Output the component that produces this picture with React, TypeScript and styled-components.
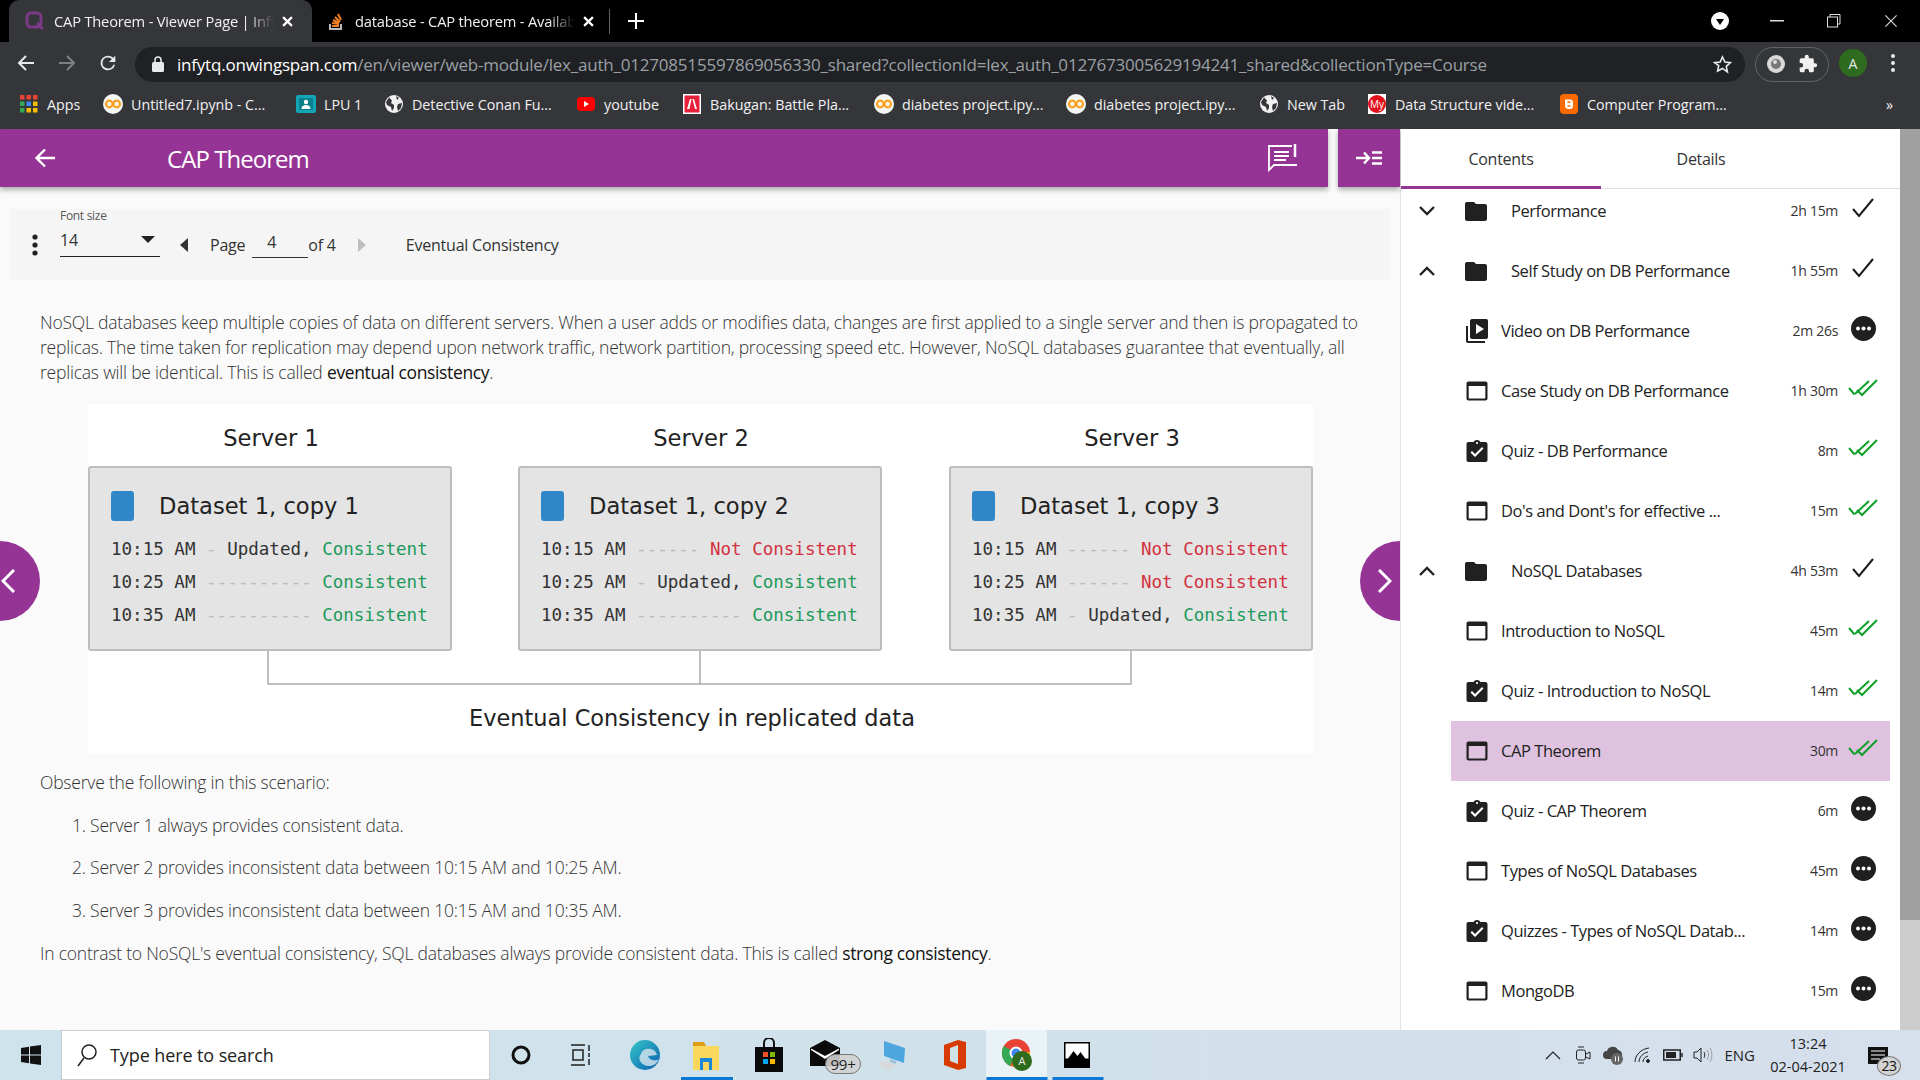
import React from "react";
import styled, { createGlobalStyle } from "styled-components";

const Global = createGlobalStyle`
  html, body { margin: 0; padding: 0; height: 100%; overflow: hidden; background: #fafafa; }
  body { font-family: "Open Sans", "Noto Sans", sans-serif; }
  * { box-sizing: border-box; }
`;
const PURPLE = "#953494";

const Page = styled.div`height: 1080px; width: 1920px; display: flex; flex-direction: column; overflow: hidden;`;

/* ---------- browser chrome ---------- */
const TabStrip = styled.div`height: 42px; background: #000; display: flex; align-items: stretch; padding-left: 9px; color: #fff; flex: none;`;
const Tab = styled.div<{ $active?: boolean }>`
  width: ${p => (p.$active ? 303 : 297)}px; display: flex; align-items: center;
  padding-left: ${p => (p.$active ? 16 : 14)}px; border-radius: 10px 10px 0 0;
  background: ${p => (p.$active ? "#35363a" : "transparent")};
`;
const TabTitle = styled.div`
  width: 220px; margin-left: 9px; font-size: 14.7px; letter-spacing: -0.2px; white-space: nowrap; overflow: hidden; color: #f1f1f1;
  -webkit-mask-image: linear-gradient(90deg, #000 88%, transparent);
  mask-image: linear-gradient(90deg, #000 88%, transparent);
`;
const TabClose = styled.span`margin-left: 8px; display: flex;`;
const TabDivider = styled.div`width: 1px; height: 25px; background: #5f6368; align-self: center;`;
const PlusButton = styled.div`margin-left: 18px; display: flex; align-items: center;`;
const WindowControls = styled.div`margin-left: auto; display: flex; align-items: center; padding-right: 1px;`;
const ControlSlot = styled.div`width: 57px; display: flex; justify-content: center; align-items: center;`;

const Toolbar = styled.div`height: 42px; background: #35363a; display: flex; align-items: center; padding-left: 17px; flex: none;`;
const NavIcon = styled.div<{ $w: number }>`width: ${p => p.$w}px; display: flex; align-items: center; flex: none;`;
const UrlBar = styled.div`
  width: 1610px; height: 35px; margin-top: 2px; border-radius: 18px; background: #202124; display: flex; align-items: center; padding-left: 17px; flex: none;
`;
const UrlText = styled.div`margin-left: 13px; font-size: 17px; letter-spacing: -0.21px; color: #9aa0a6; white-space: nowrap;`;
const UrlHost = styled.span`color: #fff;`;
const Star = styled.div`margin-left: auto; margin-right: 13px; display: flex;`;
const Pill = styled.div`
  margin-left: 10px; width: 74px; height: 35px; margin-top: 2px; border: 1px solid #5f6368; border-radius: 18px; display: flex; align-items: center; justify-content: space-around; padding: 0 4px; flex: none;
`;
const Avatar = styled.div`
  margin-left: 10px; width: 28px; height: 28px; border-radius: 50%; background: #2f6b1e; color: #e6e6e6; font-size: 14px;
  display: flex; align-items: center; justify-content: center; flex: none;
`;
const MenuDots = styled.div`margin-left: 24px; display: flex;`;

const Bookmarks = styled.div`height: 45px; background: #35363a; display: flex; align-items: center; padding-left: 20px; color: #f1f1f1; flex: none; padding-bottom: 5px;`;
const Bookmark = styled.div<{ $w: number }>`width: ${p => p.$w}px; display: flex; align-items: center; gap: 9px; font-size: 14.3px; letter-spacing: -0.02px; white-space: nowrap; flex: none;`;

/* ---------- app ---------- */
const Body = styled.div`flex: 1; display: flex; min-height: 0; background: #fafafa;`;
const Viewer = styled.div`width: 1400px; position: relative; flex: none; display: flex; flex-direction: column;`;
const HeaderRow = styled.div`display: flex; gap: 10px; height: 58px; flex: none;`;
const TitleBar = styled.div`
  width: 1328px; background: ${PURPLE}; color: #fff; display: flex; align-items: center; padding-left: 34px;
  box-shadow: 0 3px 5px rgba(0,0,0,.3);
`;
const PageTitle = styled.h1`margin: 0 0 0 112px; font-size: 24px; font-weight: 400; letter-spacing: -0.95px;`;
const BarIcon = styled.div`margin-left: auto; margin-right: 30px; display: flex;`;
const ToggleBar = styled.div`
  width: 62px; background: ${PURPLE}; display: flex; align-items: center; justify-content: center; box-shadow: 0 3px 5px rgba(0,0,0,.3);
`;

const Controls = styled.div`
  margin: 22px 10px 0; height: 71px; background: #f5f5f5; display: flex; align-items: center; padding-left: 21px; color: #333; font-size: 16px; letter-spacing: -0.22px; flex: none;
`;
const KebabSlot = styled.div`width: 8px; display: flex; margin-right: 21px;`;
const FontField = styled.div`width: 100px; height: 71px; display: flex; flex-direction: column; margin-right: 20px;`;
const FieldLabel = styled.div`font-size: 12px; letter-spacing: -0.3px; color: #555; margin-top: -2px; line-height: 17px;`;
const FieldValue = styled.div`
  height: 33px; margin-top: 0; border-bottom: 1px solid #222; display: flex; align-items: center; justify-content: space-between; font-size: 16px; padding: 6px 5px 7px 0;
`;
const PageLabel = styled.span`margin-left: 22px;`;
const PageInput = styled.div`width: 56px; height: 29px; margin: 0 0 22px 7px; border-bottom: 1px solid #333; padding: 2px 0 0 15px; align-self: flex-end;`;
const NextArrow = styled.svg`margin-left: 22px;`;
const SectionName = styled.span`margin-left: 40px;`;

const Article = styled.div`padding: 30px 0 0 40px; color: #333; font-size: 17.5px; line-height: 25px; letter-spacing: -0.21px; font-weight: 300;`;
const Para = styled.p`margin: 0; width: 1330px;`;
const Strong = styled.span`color: #111; font-weight: 400; letter-spacing: -0.36px;`;
const Steps = styled.ol`margin: 0; padding: 0 0 0 32px; list-style-position: inside;`;
const Step = styled.li`margin: 17.5px 0 0;`;
const Observe = styled(Para)`margin-top: 17.5px;`;
const Closing = styled(Para)`margin-top: 18px;`;

const Diagram = styled.div`
  margin: 18.5px 0 0 48px; width: 1225px; height: 349px; background: #fff; font-family: "DejaVu Sans", sans-serif; font-weight: 400; color: #222; letter-spacing: 0; display: flex; flex-direction: column;
`;
const Servers = styled.div`display: flex; gap: 66px;`;
const ServerCol = styled.div`width: 364px; display: flex; flex-direction: column; align-items: center; &:last-child { margin-left: 1px; }`;
const ServerName = styled.div`height: 62px; line-height: 68px; font-size: 22.6px; padding-left: 2px;`;
const ServerBox = styled.div`
  width: 100%; height: 185px; background: #e4e4e4; border: 2px solid #bdbdbd; border-radius: 3px; padding: 23px 0 0 21px;
`;
const DatasetHead = styled.div`display: flex; align-items: center; font-size: 22.6px; height: 31px; gap: 25px;`;
const BlueChip = styled.span`width: 23px; height: 30px; background: #3087c8; border-radius: 3px; flex: none;`;
const LogRows = styled.div`margin-top: 11px; font-family: "DejaVu Sans Mono", monospace; font-size: 17.55px; line-height: 33px; white-space: pre; color: #333;`;
const Dash = styled.span`color: #bbb;`;
const Good = styled.span`color: #1c9a5b;`;
const Bad = styled.span`color: #d2323f;`;
const Connector = styled.svg`display: block; flex: none;`;
const Caption = styled.div`text-align: center; font-size: 22.45px; margin-top: 15px; padding-right: 17px; line-height: 32px;`;

const SideNav = styled.div<{ $side: "left" | "right" }>`
  position: absolute; top: 412px; ${p => p.$side}: 0; width: 40px; height: 80px; background: ${PURPLE}; display: flex; align-items: center; justify-content: center;
  border-radius: ${p => (p.$side === "left" ? "0 40px 40px 0" : "40px 0 0 40px")};
  padding-${p => (p.$side === "left" ? "right" : "left")}: ${p => (p.$side === "left" ? 24 : 10)}px;
`;

/* ---------- sidebar ---------- */
const Sidebar = styled.div`width: 500px; flex: none; background: #fff; border-left: 1px solid #e2e2e2; display: flex; flex-direction: column; overflow: hidden; color: #222;`;
const Tabs = styled.div`height: 60px; display: flex; border-bottom: 1px solid #e0e0e0; position: relative; z-index: 1; background: #fff; flex: none;`;
const SideTab = styled.div<{ $on?: boolean }>`
  width: 200px; display: flex; align-items: center; justify-content: center; font-size: 16px; letter-spacing: -0.3px; color: #333; padding-top: 3px;
  border-bottom: 3px solid ${p => (p.$on ? PURPLE : "transparent")}; margin-bottom: -1px;
`;
const List = styled.div`margin-top: -8px;`;
const Row = styled.div<{ $child?: boolean; $on?: boolean }>`
  height: 60px; display: flex; align-items: center; padding-right: 4px;
  margin: 0 10px 0 ${p => (p.$child ? 50 : 0)}px; padding-left: ${p => (p.$child ? 14 : 0)}px;
  background: ${p => (p.$on ? "#dfc2df" : "transparent")};
`;
const Chevron = styled.div`width: 52px; display: flex; justify-content: center; margin-right: 11px; flex: none;`;
const RowIcon = styled.div`width: 24px; display: flex; justify-content: center; flex: none;`;
const RowTitle = styled.div<{ $folder?: boolean }>`
  margin-left: ${p => (p.$folder ? 23 : 12)}px; font-size: 16.5px; letter-spacing: -0.44px; white-space: nowrap; margin-top: -2px;
`;
const Duration = styled.div`margin-left: auto; font-size: 14px; letter-spacing: -0.3px; color: #333; margin-top: -2px;`;
const Status = styled.div`width: 46px; margin-left: 2px; display: flex; justify-content: center; margin-top: -6px;`;
const Scrollbar = styled.div`width: 20px; flex: none; background: #cdcdcd; display: flex; flex-direction: column;`;
const Thumb = styled.div`height: 791px; background: #a0a0a0;`;

/* ---------- taskbar ---------- */
const Taskbar = styled.div`height: 50px; flex: none; display: flex; align-items: center; background: linear-gradient(90deg, #cfe3ec, #d0e1ea 50%, #d6dfec); color: #111;`;
const StartSlot = styled.div`width: 61px; display: flex; justify-content: center;`;
const SearchBox = styled.div`width: 429px; height: 50px; background: #fff; border: 1px solid #ccc; display: flex; align-items: center; padding-left: 15px; gap: 13px; font-size: 18px; color: #222; letter-spacing: -0.1px;`;
const TaskSlot = styled.div<{ $active?: boolean }>`
  width: ${p => (p.$active ? 61 : 62)}px; height: 50px; display: flex; align-items: center; justify-content: center; position: relative; flex: none;
  background: ${p => (p.$active ? "#e9f2f7" : "transparent")};
`;
const OpenBar = styled.span<{ $w: number }>`
  position: absolute; bottom: 0; left: 50%; transform: translateX(-50%); width: ${p => p.$w}px; height: 3px; background: #0a78d4;
`;
const Badge = styled.span`
  position: absolute; right: 1px; bottom: 6px; width: 36px; height: 20px; border-radius: 10px; background: rgba(210,210,210,.9); border: 1px solid #777; font-size: 15px;
  display: flex; align-items: center; justify-content: center; letter-spacing: -0.3px; color: #222;
`;
const Tray = styled.div`margin-left: auto; display: flex; align-items: center; height: 50px;`;
const TraySlot = styled.div`width: 30px; display: flex; justify-content: center;`;
const Lang = styled.div`font-size: 15px; margin: 0 11px 0 6px; color: #222;`;
const Clock = styled.div`font-size: 14.5px; line-height: 23px; text-align: center; width: 84px; color: #222;`;
const Notif = styled.div`margin-left: 18px; margin-right: 20px; position: relative; display: flex; width: 32px;`;
const NotifCount = styled.span`
  position: absolute; left: 9px; top: 9px; width: 24px; height: 20px; border-radius: 50%; border: 1px solid #777; background: #d3d3d3; font-size: 14px; display: flex; align-items: center; justify-content: center; letter-spacing: -.5px;
`;

/* ---------- drawings ---------- */
const I = ({ d, size = 24 }: { d: string; size?: number }) => (
  <svg width={size} height={size} viewBox="0 0 24 24" fill="#212121"><path d={d} /></svg>
);
const FOLDER = "M10 3H3C1.9 3 1 3.9 1 5v15c0 1.100.9 2 2 2h18c1.100 0 2-.9 2-2V7c0-1.100-.9-2-2-2h-9z";
const ASSET = "M20.500 2.500H3.500C2.400 2.500 1.500 3.400 1.500 4.500v15c0 1.100.9 2 2 2h17c1.100 0 2-.9 2-2v-15c0-1.100-.9-2-2-2zm-.2 17H3.700V7h16.600z";
const QUIZ = "M20.500 3h-5.200C14.900 1.800 13.600 1 12 1s-2.900.8-3.300 2H3.500c-1.100 0-2 .9-2 2v16c0 1.100.9 2 2 2h17c1.100 0 2-.9 2-2V5c0-1.100-.9-2-2-2zM12 3c.55 0 1 .45 1 1s-.45 1-1 1-1-.45-1-1 .45-1 1-1zm-2 15l-4.500-4.500 1.500-1.500 3 3 7-7 1.500 1.500z";
const VIDEO = "M3 7H1v15c0 1.100.9 2 2 2h17v-2H3zM23 1.800C23 .8 22.200 0 21.200 0H7C6 0 5 .8 5 1.800V18c0 1 1 2 2 2h14.200c1 0 1.800-1 1.800-2zM11 15V5l8 5z";

type Kind = "asset" | "quiz" | "video";
const KindIcon = ({ kind }: { kind: Kind }) => <I d={kind === "asset" ? ASSET : kind === "quiz" ? QUIZ : VIDEO} size={26} />;

const Check = () => (
  <svg width="24" height="22" viewBox="0 0 24 22" fill="none" stroke="#1a1a1a" strokeWidth="2"><path d="M2 12l6 7L22 2" /></svg>
);
const DoubleCheck = () => (
  <svg width="30" height="18" viewBox="0 0 30 18" fill="none" stroke="#12a02a" strokeWidth="2"><path d="M1 9l5.500 6.500M7 15L21 2" /><path d="M9 11l5 5L29 1" /></svg>
);
const Pending = () => (
  <svg width="25" height="25" viewBox="0 0 25 25"><circle cx="12.500" cy="12.500" r="12.500" fill="#1f1f1f" /><circle cx="7" cy="12.500" r="2" fill="#fff" /><circle cx="12.500" cy="12.500" r="2" fill="#fff" /><circle cx="18" cy="12.500" r="2" fill="#fff" /></svg>
);
const ChevronIcon = ({ up }: { up?: boolean }) => (
  <svg width="16" height="10" viewBox="0 0 16 10" fill="none" stroke="#222" strokeWidth="2.400"><path d={up ? "M1 9l7-7 7 7" : "M1 1l7 7 7-7"} /></svg>
);
const Colab = () => (
  <svg width="20" height="20" viewBox="0 0 20 20" style={{ margin: "0 -1px" }}><circle cx="10" cy="10" r="10" fill="#f5f5f5" /><g fill="none" stroke="#f9a11b" strokeWidth="2.200"><circle cx="6.300" cy="10" r="3.300" /><circle cx="13.700" cy="10" r="3.300" /></g></svg>
);
const Globe = () => (
  <svg width="18" height="18" viewBox="0 0 18 18"><circle cx="9" cy="9" r="9" fill="#f1f1f1" /><path d="M4 2.500l3 3-1 2.500 3 2v3l-2 3-1-4-4-2-1-3zM11 1l3 2-2 2zM13 9l4-1-1 5-3 3-1-4z" fill="#35363a" /></svg>
);
const AppsGrid = () => (
  <svg width="18" height="18" viewBox="0 0 18 18">
    {["#ea4335", "#ea4335", "#ea4335", "#34a853", "#4285f4", "#fbbc05", "#34a853", "#fbbc05", "#fbbc05"].map((c, i) => (
      <rect key={i} x={(i % 3) * 6.500} y={Math.floor(i / 3) * 6.500} width="4.500" height="4.500" fill={c} />
    ))}
  </svg>
);
const Lpu = () => (
  <svg width="20" height="18" viewBox="0 0 20 18" style={{ margin: "0 -1px" }}><rect width="20" height="18" rx="2" fill="#12a5b5" /><rect x="3" y="3" width="14" height="12" fill="#0a7f8c" /><circle cx="10" cy="7" r="2.200" fill="#fff" /><path d="M5.500 14c0-3 2-4 4.500-4s4.500 1 4.500 4z" fill="#fff" /></svg>
);
const Youtube = () => (
  <svg width="18" height="18" viewBox="0 0 18 18"><rect y="2" width="18" height="14" rx="4" fill="#f00" /><path d="M7 6l5 3-5 3z" fill="#fff" /></svg>
);
const Bakugan = () => (
  <svg width="18" height="20" viewBox="0 0 18 20" style={{ margin: "-1px 0" }}><rect width="18" height="20" fill="#fff" /><rect x="1.500" y="1.500" width="15" height="17" fill="#e8213b" /><path d="M4 15L7 5h1.500L6.500 15zM9.500 5H11l3 10h-2z" fill="#fff" /></svg>
);
const MyIcon = () => (
  <svg width="18" height="20" viewBox="0 0 18 20"><rect width="18" height="20" fill="#fff" /><circle cx="9" cy="10" r="9" fill="#e2101b" /><text x="9" y="14" fontSize="10" fill="#fff" textAnchor="middle" fontFamily="Open Sans">My</text></svg>
);
const Blogger = () => (
  <svg width="18" height="20" viewBox="0 0 18 20"><rect width="18" height="20" rx="4" fill="#ff6a00" /><path d="M5 5.500h5a3 3 0 0 1 3 3v1v2a3.500 3.500 0 0 1-3.500 3.500h-1A3.500 3.500 0 0 1 5 11.500z" fill="#fff" /><path d="M7.500 8h3M7.500 12h3" stroke="#ff6a00" strokeWidth="1.400" /></svg>
);
const X = ({ s = 11, c = "#fff", w = 2 }: { s?: number; c?: string; w?: number }) => (
  <svg width={s} height={s} viewBox="0 0 10 10" stroke={c} strokeWidth={w} fill="none"><path d="M1 1l8 8M9 1l-8 8" /></svg>
);

const bookmarks: { w: number; label: string; icon: React.ReactNode }[] = [
  { w: 84, label: "Apps", icon: <AppsGrid /> },
  { w: 193, label: "Untitled7.ipynb - C...", icon: <Colab /> },
  { w: 88, label: "LPU 1", icon: <Lpu /> },
  { w: 192, label: "Detective Conan Fu...", icon: <Globe /> },
  { w: 106, label: "youtube", icon: <Youtube /> },
  { w: 192, label: "Bakugan: Battle Pla...", icon: <Bakugan /> },
  { w: 192, label: "diabetes project.ipy...", icon: <Colab /> },
  { w: 193, label: "diabetes project.ipy...", icon: <Colab /> },
  { w: 108, label: "New Tab", icon: <Globe /> },
  { w: 192, label: "Data Structure vide...", icon: <MyIcon /> },
  { w: 326, label: "Computer Program...", icon: <Blogger /> },
];

type Item = { t: string; d: string; s: "check" | "double" | "pending"; kind?: Kind; open?: boolean; on?: boolean };
const items: Item[] = [
  { t: "Performance", d: "2h 15m", s: "check" },
  { t: "Self Study on DB Performance", d: "1h 55m", s: "check", open: true },
  { t: "Video on DB Performance", d: "2m 26s", s: "pending", kind: "video" },
  { t: "Case Study on DB Performance", d: "1h 30m", s: "double", kind: "asset" },
  { t: "Quiz - DB Performance", d: "8m", s: "double", kind: "quiz" },
  { t: "Do's and Dont's for effective ...", d: "15m", s: "double", kind: "asset" },
  { t: "NoSQL Databases", d: "4h 53m", s: "check", open: true },
  { t: "Introduction to NoSQL", d: "45m", s: "double", kind: "asset" },
  { t: "Quiz - Introduction to NoSQL", d: "14m", s: "double", kind: "quiz" },
  { t: "CAP Theorem", d: "30m", s: "double", kind: "asset", on: true },
  { t: "Quiz - CAP Theorem", d: "6m", s: "pending", kind: "quiz" },
  { t: "Types of NoSQL Databases", d: "45m", s: "pending", kind: "asset" },
  { t: "Quizzes - Types of NoSQL Datab...", d: "14m", s: "pending", kind: "quiz" },
  { t: "MongoDB", d: "15m", s: "pending", kind: "asset" },
];

const Log = ({ time, mode }: { time: string; mode: "updated" | "same" | "not" }) => (
  <div>
    {time}{" "}
    {mode === "updated" && <><Dash>-</Dash> Updated, <Good>Consistent</Good></>}
    {mode === "same" && <><Dash>----------</Dash> <Good>Consistent</Good></>}
    {mode === "not" && <><Dash>------</Dash> <Bad>Not Consistent</Bad></>}
  </div>
);

const servers: { n: number; rows: ("updated" | "same" | "not")[] }[] = [
  { n: 1, rows: ["updated", "same", "same"] },
  { n: 2, rows: ["not", "updated", "same"] },
  { n: 3, rows: ["not", "not", "updated"] },
];

export default function App() {
  return (
    <Page>
      <Global />
      <TabStrip>
        <Tab $active>
          <svg width="20" height="20" viewBox="0 0 20 20" fill="none" stroke="#7b3a86" strokeWidth="3"><rect x="2" y="2" width="14" height="14" rx="4" /><path d="M12 12l6 6" /></svg>
          <TabTitle>CAP Theorem - Viewer Page | Infytq</TabTitle>
          <TabClose><X /></TabClose>
        </Tab>
        <Tab>
          <svg width="20" height="20" viewBox="0 0 20 20" fill="none" strokeWidth="2"><path d="M4 13v5h11v-5" stroke="#bcbbbb" /><path d="M6 15h7M6 12l7 1M7 9l6 3M9 6l5 5M12 3l3 6" stroke="#f48024" /></svg>
          <TabTitle>database - CAP theorem - Availability</TabTitle>
          <TabClose><X /></TabClose>
        </Tab>
        <TabDivider />
        <PlusButton>
          <svg width="16" height="16" viewBox="0 0 16 16" stroke="#fff" strokeWidth="2"><path d="M8 0v16M0 8h16" /></svg>
        </PlusButton>
        <WindowControls>
          <ControlSlot>
            <svg width="18" height="18" viewBox="0 0 18 18"><circle cx="9" cy="9" r="9" fill="#fff" /><path d="M5 7h8l-4 6z" fill="#000" /></svg>
          </ControlSlot>
          <ControlSlot><svg width="14" height="2"><rect width="14" height="1.500" fill="#ddd" /></svg></ControlSlot>
          <ControlSlot><svg width="14" height="14" viewBox="0 0 14 14" fill="none" stroke="#ddd"><rect x=".5" y="3" width="10" height="10" /><path d="M3 3V.5h10V10h-2.500" /></svg></ControlSlot>
          <ControlSlot><X s={14} c="#ddd" w={.8} /></ControlSlot>
        </WindowControls>
      </TabStrip>

      <Toolbar>
        <NavIcon $w={41}><svg width="18" height="18" viewBox="0 0 18 18" fill="none" stroke="#e8eaed" strokeWidth="2"><path d="M17 9H2M9 2L2 9l7 7" /></svg></NavIcon>
        <NavIcon $w={41}><svg width="18" height="18" viewBox="0 0 18 18" fill="none" stroke="#7d8084" strokeWidth="2"><path d="M1 9h15M9 2l7 7-7 7" /></svg></NavIcon>
        <NavIcon $w={36}><svg width="22" height="22" viewBox="0 0 24 24" fill="#e8eaed" style={{ marginLeft: -2 }}><path d="M17.650 6.350A8 8 0 1 0 19.730 14h-2.080A6 6 0 1 1 12 6c1.660 0 3.140.69 4.220 1.780L13 11h7V4z" /></svg></NavIcon>
        <UrlBar>
          <svg width="12" height="16" viewBox="0 0 12 16"><rect y="6" width="12" height="10" rx="1.500" fill="#e8eaed" /><path d="M3 6V4a3 3 0 0 1 6 0v2" fill="none" stroke="#e8eaed" strokeWidth="1.500" /></svg>
          <UrlText><UrlHost>infytq.onwingspan.com</UrlHost>/en/viewer/web-module/lex_auth_012708515597869056330_shared?collectionId=lex_auth_0127673005629194241_shared&amp;collectionType=Course</UrlText>
          <Star>
            <svg width="19" height="19" viewBox="0 0 24 24" fill="none" stroke="#e8eaed" strokeWidth="2"><path d="M12 2.500l3 6.400 7 .8-5.200 4.700 1.400 6.900L12 17l-6.200 3.300 1.400-6.900L2 9.700l7-.8z" /></svg>
          </Star>
        </UrlBar>
        <Pill>
          <svg width="20" height="20" viewBox="0 0 20 20"><circle cx="10" cy="10" r="9" fill="#d8d8d8" /><circle cx="10" cy="10" r="5" fill="#777" /><circle cx="9" cy="8" r="2" fill="#ddd" /></svg>
          <svg width="20" height="20" viewBox="0 0 24 24" fill="#f1f1f1"><path d="M20.500 11H19V7a2 2 0 0 0-2-2h-4V3.500a2.500 2.500 0 0 0-5 0V5H4a2 2 0 0 0-2 2v3.800h1.500a2.700 2.700 0 0 1 0 5.400H2V20a2 2 0 0 0 2 2h3.800v-1.500a2.700 2.700 0 0 1 5.400 0V22H17a2 2 0 0 0 2-2v-4h1.500a2.500 2.500 0 0 0 0-5z" /></svg>
        </Pill>
        <Avatar>A</Avatar>
        <MenuDots><svg width="4" height="18" viewBox="0 0 4 18" fill="#e8eaed"><circle cx="2" cy="2" r="2" /><circle cx="2" cy="9" r="2" /><circle cx="2" cy="16" r="2" /></svg></MenuDots>
      </Toolbar>

      <Bookmarks>
        {bookmarks.map((b, i) => (
          <Bookmark key={i} $w={b.w}>{b.icon}{b.label}</Bookmark>
        ))}
        <Bookmark $w={20}>»</Bookmark>
      </Bookmarks>

      <Body>
        <Viewer>
          <HeaderRow>
            <TitleBar>
              <svg width="21" height="20" viewBox="0 0 21 20" fill="none" stroke="#fff" strokeWidth="2.400"><path d="M21 10H3M11 1.500L2.500 10l8.500 8.500" /></svg>
              <PageTitle>CAP Theorem</PageTitle>
              <BarIcon>
                <svg width="31" height="28" viewBox="0 0 31 28" fill="none" stroke="#fff" strokeWidth="1.800"><path d="M25 2H2v24l5-5h23" /><path d="M7 8h15M7 12h15M7 16h12" /><path d="M28 0v13" strokeWidth="2.500" /></svg>
              </BarIcon>
            </TitleBar>
            <ToggleBar>
              <svg width="26" height="14" viewBox="0 0 26 14" fill="none" stroke="#fff" strokeWidth="2.500"><path d="M0 7h12M8 1.500L13 7l-5 5.500" /><path d="M16 1.500h10M16 7h10M16 12.500h10" /></svg>
            </ToggleBar>
          </HeaderRow>

          <Controls>
            <KebabSlot><svg width="8" height="22" viewBox="0 0 8 22" fill="#222"><circle cx="4" cy="3" r="2.600" /><circle cx="4" cy="11" r="2.600" /><circle cx="4" cy="19" r="2.600" /></svg></KebabSlot>
            <FontField>
              <FieldLabel>Font size</FieldLabel>
              <FieldValue>14<svg width="14" height="7" viewBox="0 0 14 7" fill="#222"><path d="M0 0h14L7 7z" /></svg></FieldValue>
            </FontField>
            <svg width="8" height="14" viewBox="0 0 8 14" fill="#333"><path d="M8 0v14L0 7z" /></svg>
            <PageLabel>Page</PageLabel>
            <PageInput>4</PageInput>
            <span>of 4</span>
            <NextArrow width="8" height="14" viewBox="0 0 8 14" fill="#bdbdbd"><path d="M0 0v14l8-7z" /></NextArrow>
            <SectionName>Eventual Consistency</SectionName>
          </Controls>

          <Article>
            <Para>
              NoSQL databases keep multiple copies of data on different servers. When a user adds or modifies data, changes are first applied to a single server and then is propagated to replicas. The time taken for replication may depend upon network traffic, network partition, processing speed etc. However, NoSQL databases guarantee that eventually, all replicas will be identical. This is called <Strong>eventual consistency</Strong>.
            </Para>
            <Diagram>
              <Servers>
                {servers.map(s => (
                  <ServerCol key={s.n}>
                    <ServerName>Server {s.n}</ServerName>
                    <ServerBox>
                      <DatasetHead><BlueChip />Dataset 1, copy {s.n}</DatasetHead>
                      <LogRows>
                        <Log time="10:15 AM" mode={s.rows[0]} />
                        <Log time="10:25 AM" mode={s.rows[1]} />
                        <Log time="10:35 AM" mode={s.rows[2]} />
                      </LogRows>
                    </ServerBox>
                  </ServerCol>
                ))}
              </Servers>
              <Connector width="1225" height="36" viewBox="0 0 1225 36" fill="none" stroke="#aaa" strokeWidth="1.500">
                <path d="M180 0v33h863V0M612 0v33" />
              </Connector>
              <Caption>Eventual Consistency in replicated data</Caption>
            </Diagram>
            <Observe>Observe the following in this scenario:</Observe>
            <Steps>
              <Step>Server 1 always provides consistent data.</Step>
              <Step>Server 2 provides inconsistent data between 10:15 AM and 10:25 AM.</Step>
              <Step>Server 3 provides inconsistent data between 10:15 AM and 10:35 AM.</Step>
            </Steps>
            <Closing>
              In contrast to NoSQL's eventual consistency, SQL databases always provide consistent data. This is called <Strong>strong consistency</Strong>.
            </Closing>
          </Article>

          <SideNav $side="left">
            <svg width="14" height="24" viewBox="0 0 14 24" fill="none" stroke="#fff" strokeWidth="3"><path d="M13 1L2 12l11 11" /></svg>
          </SideNav>
          <SideNav $side="right">
            <svg width="14" height="24" viewBox="0 0 14 24" fill="none" stroke="#fff" strokeWidth="3"><path d="M1 1l11 11L1 23" /></svg>
          </SideNav>
        </Viewer>

        <Sidebar>
          <Tabs>
            <SideTab $on>Contents</SideTab>
            <SideTab>Details</SideTab>
          </Tabs>
          <List>
            {items.map(it => (
              <Row key={it.t} $child={!!it.kind} $on={it.on}>
                {it.kind ? (
                  <RowIcon><KindIcon kind={it.kind} /></RowIcon>
                ) : (
                  <>
                    <Chevron><ChevronIcon up={it.open} /></Chevron>
                    <RowIcon><I d={FOLDER} size={28} /></RowIcon>
                  </>
                )}
                <RowTitle $folder={!it.kind}>{it.t}</RowTitle>
                <Duration>{it.d}</Duration>
                <Status>
                  {it.s === "check" ? <Check /> : it.s === "double" ? <DoubleCheck /> : <Pending />}
                </Status>
              </Row>
            ))}
          </List>
        </Sidebar>
        <Scrollbar><Thumb /></Scrollbar>
      </Body>

      <Taskbar>
        <StartSlot>
          <svg width="20" height="20" viewBox="0 0 20 20" fill="#111"><path d="M0 3l8-1.200V9.500H0zM9 1.600L20 0v9.500H9zM0 10.500h8v7.700L0 17zM9 10.500h11V20L9 18.400z" /></svg>
        </StartSlot>
        <SearchBox>
          <svg width="20" height="24" viewBox="0 0 20 24" fill="none" stroke="#222" strokeWidth="1.500"><circle cx="12" cy="9" r="7" /><path d="M7 15l-6 8" /></svg>
          Type here to search
        </SearchBox>
        <TaskSlot>
          <svg width="20" height="20" viewBox="0 0 20 20" fill="none" stroke="#111" strokeWidth="3"><circle cx="10" cy="10" r="8" /></svg>
        </TaskSlot>
        <TaskSlot>
          <svg width="22" height="22" viewBox="0 0 22 22" fill="none" stroke="#222" strokeWidth="1.500" style={{ marginRight: 4 }}><path d="M1 1h14M1 21h14M3 6h10v10H3zM19 1v6M19 9v4M19 15v6" /></svg>
        </TaskSlot>
        <TaskSlot>
          <svg width="32" height="32" viewBox="0 0 32 32"><defs><linearGradient id="edge" x1="0" y1="0" x2="1" y2="1"><stop offset="0" stopColor="#36c6c8" /><stop offset="1" stopColor="#0b5fb0" /></linearGradient></defs><circle cx="16" cy="16" r="15" fill="url(#edge)" /><path d="M12 15c2-7 14-7 16 1l-9 1c1 4 7 6 11 3-3 8-14 10-19 2-1-2-1-5 1-7z" fill="#cfe2ec" opacity=".85" /></svg>
        </TaskSlot>
        <TaskSlot>
          <svg width="28" height="30" viewBox="0 0 28 30"><path d="M0 2h11l2 4h-13z" fill="#dc9c14" /><path d="M0 6h26v24H0z" fill="#fcd75e" /><path d="M7 30V18h12v12h-3v-8h-6v8z" fill="#1e88d8" /></svg>
          <OpenBar $w={52} />
        </TaskSlot>
        <TaskSlot>
          <svg width="28" height="34" viewBox="0 0 28 34"><path d="M9 9V5a5 5 0 0 1 10 0v4" fill="none" stroke="#111" strokeWidth="2" /><rect y="9" width="28" height="25" fill="#0a0a0a" /><rect x="8" y="14" width="5" height="5" fill="#f25022" /><rect x="15" y="14" width="5" height="5" fill="#7fba00" /><rect x="8" y="21" width="5" height="5" fill="#00a4ef" /><rect x="15" y="21" width="5" height="5" fill="#ffb900" /></svg>
        </TaskSlot>
        <TaskSlot>
          <svg width="30" height="26" viewBox="0 0 30 26" style={{ marginRight: 12, marginTop: -4 }}><path d="M0 8L15 0l15 8v18H0z" fill="#0a0a0a" /><path d="M1 8.500L15 16 29 8.500V10L15 19 1 10z" fill="#fff" /></svg>
          <Badge>99+</Badge>
        </TaskSlot>
        <TaskSlot>
          <svg width="30" height="30" viewBox="0 0 30 30" style={{ marginRight: 4 }}><path d="M8 1l21 7-1 15-20-7z" fill="#4ea6e0" /><path d="M14 19l6 2v3l-6-2z" fill="#9cc4dc" /><path d="M1 24l9-3 10 4-8 4z" fill="#d8d8d8" /></svg>
        </TaskSlot>
        <TaskSlot>
          <svg width="24" height="30" viewBox="0 0 24 30"><path d="M1 5L15 0l8 2v26l-8 2L1 25zM7 8v13l8 3V5z" fill="#d83b01" /></svg>
        </TaskSlot>
        <TaskSlot $active>
          <svg width="32" height="34" viewBox="0 0 32 34"><circle cx="15" cy="15" r="14" fill="#ea4335" /><path d="M15 15L3 8a14 14 0 0 0 6 20z" fill="#34a853" /><path d="M15 15l14-1a14 14 0 0 1-18 14z" fill="#fbbc05" /><circle cx="15" cy="15" r="5.500" fill="#4285f4" stroke="#fff" strokeWidth="2" /><circle cx="21" cy="23" r="10" fill="#2f6b1e" /><text x="21" y="27" fontSize="11" fill="#e8e8e8" textAnchor="middle" fontFamily="Open Sans">A</text></svg>
          <OpenBar $w={61} />
        </TaskSlot>
        <TaskSlot>
          <svg width="26" height="26" viewBox="0 0 26 26" style={{ marginRight: 2 }}><rect width="26" height="26" fill="#000" /><rect x="1.500" y="1.500" width="23" height="15" fill="#fff" /><path d="M1.500 20l8-11 4 5 3-4 8 11v4h-23z" fill="#000" /></svg>
          <OpenBar $w={51} />
        </TaskSlot>
        <Tray>
          <TraySlot><svg width="16" height="9" viewBox="0 0 16 9" fill="none" stroke="#222" strokeWidth="1.200"><path d="M1 8l7-7 7 7" /></svg></TraySlot>
          <TraySlot><svg width="16" height="20" viewBox="0 0 16 20" fill="none" stroke="#222"><rect x="1.500" y="5" width="9" height="10" rx="2" /><path d="M11 9l4-2v7l-4-2M3 2h6M3 18h6" /></svg></TraySlot>
          <TraySlot><svg width="22" height="20" viewBox="0 0 22 20"><path d="M5 14a4 4 0 0 1 0-8 6 6 0 0 1 11-1 5 5 0 0 1 2 9z" fill="#444" /><circle cx="15" cy="14" r="6" fill="#666" /><path d="M13.500 11.500v5M16.500 11.500v5" stroke="#fff" /></svg></TraySlot>
          <TraySlot><svg width="18" height="16" viewBox="0 0 18 16" fill="none" stroke="#222"><path d="M1 15C1 8 7 2 15 1M5 15c0-5 4-9 9-10M9 15c0-3 2-5 5-6" /><circle cx="14" cy="14" r="1.500" fill="#222" /></svg></TraySlot>
          <TraySlot><svg width="20" height="12" viewBox="0 0 20 12" fill="none" stroke="#222" strokeWidth="1.500"><rect x=".75" y="1" width="16.500" height="10" /><rect x="3" y="3" width="10" height="6" fill="#222" stroke="none" /><path d="M19 4v4" /></svg></TraySlot>
          <TraySlot><svg width="20" height="16" viewBox="0 0 20 16" fill="none" stroke="#222"><path d="M1 5h3l4-4v14l-4-4H1z" /><path d="M11 5c1 2 1 4 0 6" /><path d="M14 3c2 3 2 7 0 10M17 1c2.500 4 2.500 10 0 14" stroke="#999" /></svg></TraySlot>
          <Lang>ENG</Lang>
          <Clock>13:24<br />02-04-2021</Clock>
          <Notif>
            <svg width="20" height="17" viewBox="0 0 20 17" fill="#111"><path d="M0 0h20v17H0z" /><path d="M3 4h14M3 8h14M3 12h9" stroke="#fff" /></svg>
            <NotifCount>23</NotifCount>
          </Notif>
        </Tray>
      </Taskbar>
    </Page>
  );
}
